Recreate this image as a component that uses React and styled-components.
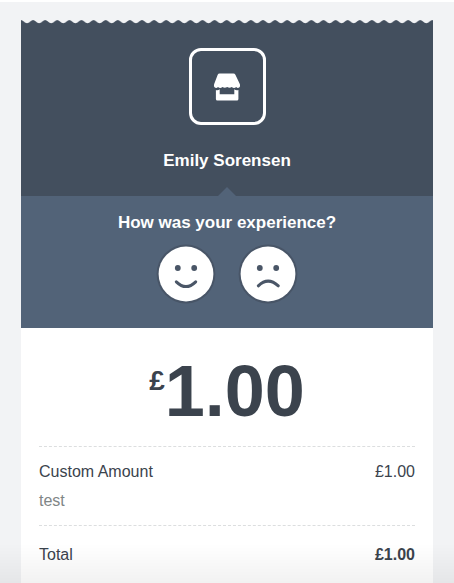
import React, { useState } from 'react';
import styled, { createGlobalStyle } from 'styled-components';

const GlobalStyle = createGlobalStyle`
  * {
    box-sizing: border-box;
  }
  body {
    margin: 0;
    background: #f2f3f5;
    color: #3b434d;
    font-family: 'Liberation Sans', Arial, sans-serif;
    font-size: 16px;
    line-height: 20px;
  }
`;

const Page = styled.div`
  min-height: 100vh;
  display: flex;
  flex-direction: column;
  border-top: 2px solid #fff;
  padding: 18px 21px 0;
`;

const Receipt = styled.main`
  flex: 1;
  display: flex;
  flex-direction: column;
  background: #fff;
`;

const Edge = styled.svg`
  display: block;
  width: 100%;
  height: 4px;
  background: #f2f3f5;
`;

const Header = styled.header`
  display: flex;
  flex-direction: column;
  align-items: center;
  gap: 26px;
  padding: 24px 18px 25px;
  background: #434f5e;
  color: #fff;
`;

const Logo = styled.div`
  display: flex;
  align-items: center;
  justify-content: center;
  width: 77px;
  height: 77px;
  border: 3px solid #fff;
  border-radius: 12px;
`;

const Merchant = styled.h1`
  margin: 0;
  font-size: 17px;
  line-height: 20px;
  font-weight: 700;
`;

const Feedback = styled.section`
  position: relative;
  display: flex;
  flex-direction: column;
  align-items: center;
  gap: 11px;
  padding: 17px 18px 24px;
  background: #526378;
  color: #fff;

  &::before {
    content: '';
    position: absolute;
    bottom: 100%;
    left: 50%;
    margin-left: -9px;
    border: 9px solid transparent;
    border-top: 0;
    border-bottom-color: #526378;
  }
`;

const Question = styled.h2`
  margin: 0;
  font-size: 17px;
  line-height: 20px;
  font-weight: 700;
`;

const Faces = styled.div`
  display: flex;
  gap: 22px;
`;

const FaceButton = styled.button`
  display: block;
  width: 60px;
  height: 60px;
  padding: 0;
  border: none;
  border-radius: 50%;
  background: none;
  cursor: pointer;
  opacity: ${({ $faded }) => ($faded ? 0.5 : 1)};
`;

const Amount = styled.div`
  display: flex;
  justify-content: center;
  align-items: flex-start;
  padding: 23px 0 15px;
  font-size: 72px;
  line-height: 80px;
  font-weight: 700;
`;

const Currency = styled.span`
  font-size: 28px;
  line-height: 60px;
`;

const Details = styled.dl`
  margin: 0 18px;
`;

const Row = styled.div`
  display: flex;
  justify-content: space-between;
  padding: ${({ $total }) => ($total ? '19px 0' : '15px 0 14px')};
  border-top: 1px dashed #dcdedf;
`;

const Label = styled.dt`
  display: flex;
  flex-direction: column;
  gap: 9px;
`;

const Note = styled.span`
  color: #7f8687;
`;

const Price = styled.dd`
  margin: 0;
  font-weight: ${({ $bold }) => ($bold ? 700 : 400)};
`;

const Fade = styled.div`
  position: fixed;
  left: 0;
  right: 0;
  bottom: 0;
  height: 40px;
  background: linear-gradient(rgba(0, 0, 0, 0), rgba(0, 0, 0, 0.05));
  pointer-events: none;
`;

const ScallopedEdge = () => (
  <Edge aria-hidden="true">
    <defs>
      <pattern id="scallop" width="12.1" height="4" patternUnits="userSpaceOnUse">
        <path d="M0 0 C1.5 0 4 3.2 6.05 3.2 C8.1 3.2 10.6 0 12.1 0 V4 H0 Z" fill="#434f5e" />
      </pattern>
    </defs>
    <rect width="100%" height="4" fill="url(#scallop)" />
  </Edge>
);

const StoreIcon = () => (
  <svg width="28" height="28" viewBox="0 0 28 28" fill="#fff" aria-hidden="true">
    <path d="M6.6 .5 H20.4 Q21.8 .5 22.4 1.7 L26.9 11.2 Q27.6 13.4 26.2 14.6 Q24.6 15.8 23.2 14 Q21 15.8 18.8 14 Q16.6 15.6 14.2 14 Q11.8 15.6 9.4 14 Q7.2 15.8 5 14 Q3.4 15.8 1.8 14.6 Q.4 13.4 1.1 11.2 L4.7 1.7 Q5.2 .5 6.6 .5 Z" />
    <path d="M2.9 17 Q5.2 17.6 6.7 16.2 V21.2 H21.3 V16.2 Q22.8 17.6 25.4 17 V26 Q25.4 27.5 23.9 27.5 H4.4 Q2.9 27.5 2.9 26 Z" />
  </svg>
);

const Face = ({ mouth }) => (
  <svg width="60" height="60" viewBox="0 0 60 60" aria-hidden="true">
    <circle cx="30" cy="30" r="29.4" fill="#485567" />
    <circle cx="30" cy="30" r="27.4" fill="#fff" />
    <circle cx="21.8" cy="24" r="2.9" fill="#4a5667" />
    <circle cx="38.2" cy="24" r="2.9" fill="#4a5667" />
    <path d={mouth} fill="none" stroke="#4a5667" strokeWidth="3" strokeLinecap="round" />
  </svg>
);

const faces = [
  { id: 'good', label: 'Good', mouth: 'M20.3 37.8 Q30 47.2 39.7 37.8' },
  { id: 'bad', label: 'Bad', mouth: 'M20.3 41.8 Q30 32.4 40.3 41.8' },
];

const App = () => {
  const [rating, setRating] = useState(null);

  return (
    <>
      <GlobalStyle />
      <Page>
        <Receipt>
          <ScallopedEdge />
          <Header>
            <Logo>
              <StoreIcon />
            </Logo>
            <Merchant>Emily Sorensen</Merchant>
          </Header>
          <Feedback>
            <Question>How was your experience?</Question>
            <Faces>
              {faces.map((face) => (
                <FaceButton
                  key={face.id}
                  type="button"
                  aria-label={face.label}
                  $faded={rating && rating !== face.id}
                  onClick={() => setRating(face.id)}
                >
                  <Face mouth={face.mouth} />
                </FaceButton>
              ))}
            </Faces>
          </Feedback>
          <Amount>
            <Currency>£</Currency>
            <span>1.00</span>
          </Amount>
          <Details>
            <Row>
              <Label>
                <span>Custom Amount</span>
                <Note>test</Note>
              </Label>
              <Price>£1.00</Price>
            </Row>
            <Row $total>
              <Label>Total</Label>
              <Price $bold>£1.00</Price>
            </Row>
          </Details>
        </Receipt>
      </Page>
      <Fade />
    </>
  );
};

export default App;
